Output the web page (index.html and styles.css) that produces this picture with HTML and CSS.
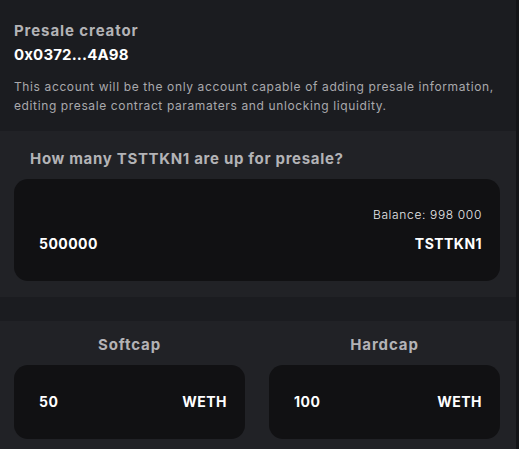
FILE: index.html
```html
<!DOCTYPE html>
<html>
<head>
<meta charset="utf-8">
<link rel="stylesheet" href="styles.css">
</head>
<body>
<div class="page">
  <section class="creator">
    <div class="label">Presale creator</div>
    <div class="address">0x0372...4A98</div>
    <p class="desc">This account will be the only account capable of adding presale information, editing presale contract paramaters and unlocking liquidity.</p>
  </section>
  <section class="panel amount">
    <div class="question">How many TSTTKN1 are up for presale?</div>
    <div class="card big">
      <div class="balance">Balance: 998 000</div>
      <div class="row">
        <span class="value">500000</span>
        <span class="unit">TSTTKN1</span>
      </div>
    </div>
  </section>
  <section class="panel caps">
    <div class="cap">
      <div class="cap-label">Softcap</div>
      <div class="card small">
        <span class="value">50</span>
        <span class="unit">WETH</span>
      </div>
    </div>
    <div class="cap">
      <div class="cap-label">Hardcap</div>
      <div class="card small">
        <span class="value">100</span>
        <span class="unit">WETH</span>
      </div>
    </div>
  </section>
</div>
</body>
</html>
```

FILE: styles.css
```css
* { box-sizing: border-box; }
html, body { margin: 0; padding: 0; }
body {
  background: #1b1c20;
  font-family: Inter, "Noto Sans", sans-serif;
  width: 519px;
  height: 449px;
  overflow: hidden;
}
.page {
  width: 519px;
  border-right: 3px solid #131417;
  min-height: 449px;
}
.creator {
  padding: 21px 16px 0 14px;
  height: 131px;
}
.label {
  color: #b3b3b6;
  font-weight: 700;
  font-size: 15px;
  line-height: 20px;
  letter-spacing: 0.9px;
}
.address {
  color: #ffffff;
  font-weight: 700;
  font-size: 15px;
  line-height: 20px;
  margin-top: 4px;
  letter-spacing: 0.15px;
}
.desc {
  margin: 12px 0 0 0;
  color: #a9a9ad;
  font-size: 12px;
  line-height: 19px;
  font-weight: 400;
  letter-spacing: 0.62px;
}
.panel {
  background: #212226;
}
.amount {
  padding: 18px 16px 16px 14px;
  margin-bottom: 24px;
}
.question {
  color: #b3b3b6;
  font-weight: 700;
  font-size: 15px;
  line-height: 20px;
  padding-left: 16px;
  margin-bottom: 10px;
  letter-spacing: 0.68px;
}
.card {
  background: #111113;
  border-radius: 14px;
  color: #fff;
}
.big {
  height: 102px;
  padding: 28px 18px 0 25px;
}
.balance {
  text-align: right;
  font-size: 12px;
  font-weight: 300;
  line-height: 16px;
  color: #e8e8ea;
  letter-spacing: 0.65px;
}
.row {
  display: flex;
  justify-content: space-between;
  margin-top: 12px;
}
.value, .unit {
  font-weight: 700;
  font-size: 14px;
  line-height: 18px;
  letter-spacing: 0.45px;
}
.caps {
  display: flex;
  gap: 24px;
  padding: 14px 16px 0 14px;
  height: 128px;
}
.cap { flex: 1; }
.cap-label {
  text-align: center;
  color: #b3b3b6;
  font-weight: 700;
  font-size: 15px;
  line-height: 20px;
  margin-bottom: 10px;
  letter-spacing: 0.9px;
}
.small {
  height: 74px;
  display: flex;
  align-items: center;
  justify-content: space-between;
  padding: 0 18px 0 25px;
}
```
